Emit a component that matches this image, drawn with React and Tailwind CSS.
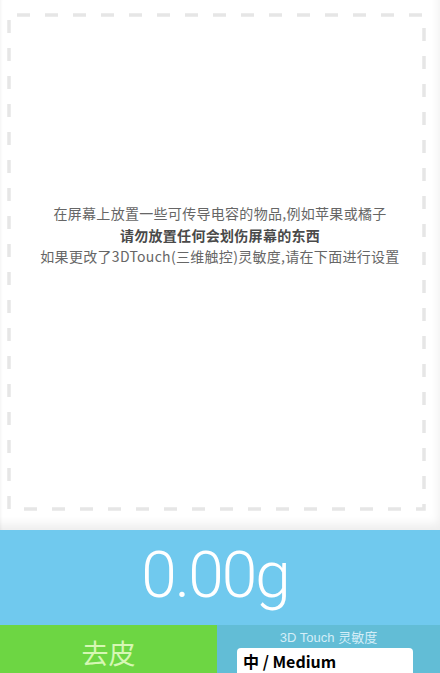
export default function App() {
  return (
    <div className="w-[440px] h-[673px] flex flex-col overflow-hidden font-['Noto_Sans_CJK_SC',sans-serif]">
      {/* scale surface */}
      <div className="relative shrink-0 h-[530px] bg-white shadow-[inset_-7px_-12px_10px_-6px_rgba(0,0,0,0.07),inset_3px_0_3px_-2px_rgba(0,0,0,0.05)]">
        <svg className="absolute inset-0" width="440" height="530">
          <rect
            x="9"
            y="15"
            width="415"
            height="494"
            fill="none"
            stroke="#e6e6e6"
            strokeWidth="3.5"
            strokeDasharray="13 15"
            strokeDashoffset="-8"
          />
        </svg>
        <div className="pt-[203px] flex flex-col items-center text-[14px] leading-[21.5px] text-[#666] tracking-[0.3px]">
          <p>在屏幕上放置一些可传导电容的物品,例如苹果或橘子</p>
          <p className="font-bold text-[#4a4a4a]">请勿放置任何会划伤屏幕的东西</p>
          <p>如果更改了3DTouch(三维触控)灵敏度,请在下面进行设置</p>
        </div>
      </div>

      {/* weight readout */}
      <div className="shrink-0 h-[95px] bg-[#70c9ee] flex items-center justify-center">
        <span className="font-['Roboto',sans-serif] font-light text-white text-[64px] leading-none tracking-[-2px] pb-[4px] pr-[10px]">
          0.00g
        </span>
      </div>

      {/* controls */}
      <div className="h-[48px] shrink-0 flex overflow-hidden">
        <div className="w-[217px] bg-[#6dd643] flex items-center justify-center">
          <span className="text-[27px] text-[#d6f7b4] leading-none pt-[6px]">去皮</span>
        </div>
        <div className="flex-1 bg-[#62bdd6] flex flex-col pt-[5px]">
          <span className="self-center font-['Liberation_Sans','Noto_Sans_CJK_SC',sans-serif] text-[13px] leading-[16px] text-[#d4eef8]">
            3D Touch 灵敏度
          </span>
          <div className="shrink-0 ml-[20px] mt-[2px] w-[176px] h-[40px] bg-white rounded-[4px] px-[6px] pt-[2px] text-[16px] font-bold text-black leading-[22px]">
            中 / Medium
          </div>
        </div>
      </div>
    </div>
  )
}
